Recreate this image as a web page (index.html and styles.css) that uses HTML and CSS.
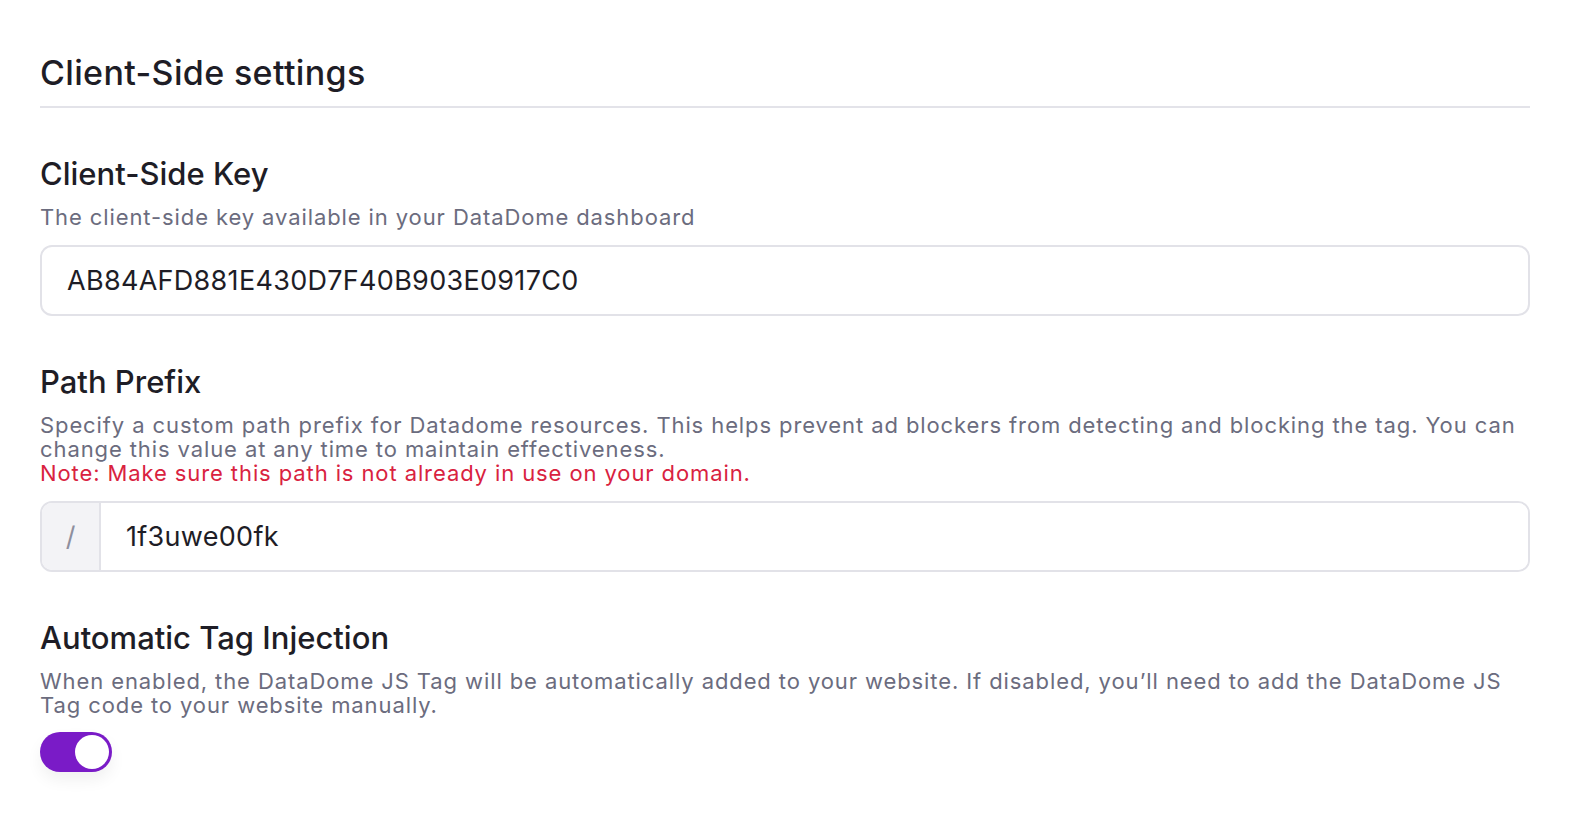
FILE: index.html
```html
<!DOCTYPE html>
<html lang="en">
<head>
    <meta charset="UTF-8">
    <meta name="viewport" content="width=device-width, initial-scale=1.0">
    <title>Client-Side settings</title>
    <link rel="stylesheet" href="styles.css">
</head>
<body>

    <div class="settings">
        <h2 class="settings-title">Client-Side settings</h2>

        <div class="field">
            <label class="field-label" for="clientKey">Client-Side Key</label>
            <p class="field-help">The client-side key available in your DataDome dashboard</p>
            <input class="text-input" type="text" id="clientKey" value="AB84AFD881E430D7F40B903E0917C0">
        </div>

        <div class="field">
            <label class="field-label" for="pathPrefix">Path Prefix</label>
            <p class="field-help">Specify a custom path prefix for Datadome resources. This helps prevent ad blockers from detecting and blocking the tag. You can change this value at any time to maintain effectiveness.</p>
            <p class="field-help field-note">Note: Make sure this path is not already in use on your domain.</p>
            <div class="input-group">
                <span class="input-addon">/</span>
                <input class="text-input grouped" type="text" id="pathPrefix" value="1f3uwe00fk">
            </div>
        </div>

        <div class="field">
            <label class="field-label" for="autoTag">Automatic Tag Injection</label>
            <p class="field-help">When enabled, the DataDome JS Tag will be automatically added to your website. If disabled, you’ll need to add the DataDome JS Tag code to your website manually.</p>
            <label class="toggle">
                <input type="checkbox" id="autoTag" checked>
                <span class="toggle-track"><span class="toggle-knob"></span></span>
            </label>
        </div>
    </div>

</body>
</html>
```

FILE: styles.css
```css
body {
    margin: 0;
    background-color: #fff;
    font-family: Inter, 'Liberation Sans', sans-serif;
    color: #1e1d26;
}

.settings {
    padding: 53px 60px 40px 40px;
}

.settings-title {
    margin: 0;
    padding-bottom: 13px;
    font-size: 34px;
    line-height: 40px;
    font-weight: 500;
    letter-spacing: 0.35px;
    border-bottom: 2px solid #e3e3e9;
}

.field {
    margin-top: 48px;
}

.field-label {
    display: block;
    font-size: 31px;
    line-height: 36px;
    font-weight: 500;
    color: #1e1d26;
}

.field-help {
    margin: 13px 0 0;
    font-size: 22px;
    line-height: 24px;
    letter-spacing: 0.9px;
    color: #6b6c7e;
}

.field-note {
    margin-top: 0;
    color: #d9223f;
}

.text-input {
    display: block;
    width: 100%;
    height: 71px;
    margin-top: 16px;
    padding: 0 25px;
    box-sizing: border-box;
    border: 2px solid #e2e2e8;
    border-radius: 12px;
    font-family: inherit;
    font-size: 27px;
    letter-spacing: 0.3px;
    color: #1e1d26;
    background: #fff;
    outline: none;
}

.input-group {
    display: flex;
    margin-top: 16px;
    height: 71px;
    border: 2px solid #e2e2e8;
    border-radius: 12px;
    box-sizing: border-box;
    overflow: hidden;
}

.input-addon {
    display: flex;
    align-items: center;
    justify-content: center;
    width: 57px;
    flex-shrink: 0;
    background-color: #f3f3f6;
    border-right: 2px solid #e2e2e8;
    font-size: 27px;
    color: #8e8f9e;
}

.text-input.grouped {
    margin: 0;
    height: 100%;
    border: none;
    border-radius: 0;
}

.toggle {
    display: inline-block;
    margin-top: 15px;
    cursor: pointer;
}

.toggle input {
    display: none;
}

.toggle-track {
    display: flex;
    align-items: center;
    justify-content: flex-end;
    width: 72px;
    height: 40px;
    padding: 3px;
    box-sizing: border-box;
    border-radius: 20px;
    background-color: #7a1bc7;
    box-shadow: 0 8px 16px rgba(0, 0, 0, 0.06);
}

.toggle-knob {
    width: 34px;
    height: 34px;
    border-radius: 50%;
    background-color: #fff;
}
```
